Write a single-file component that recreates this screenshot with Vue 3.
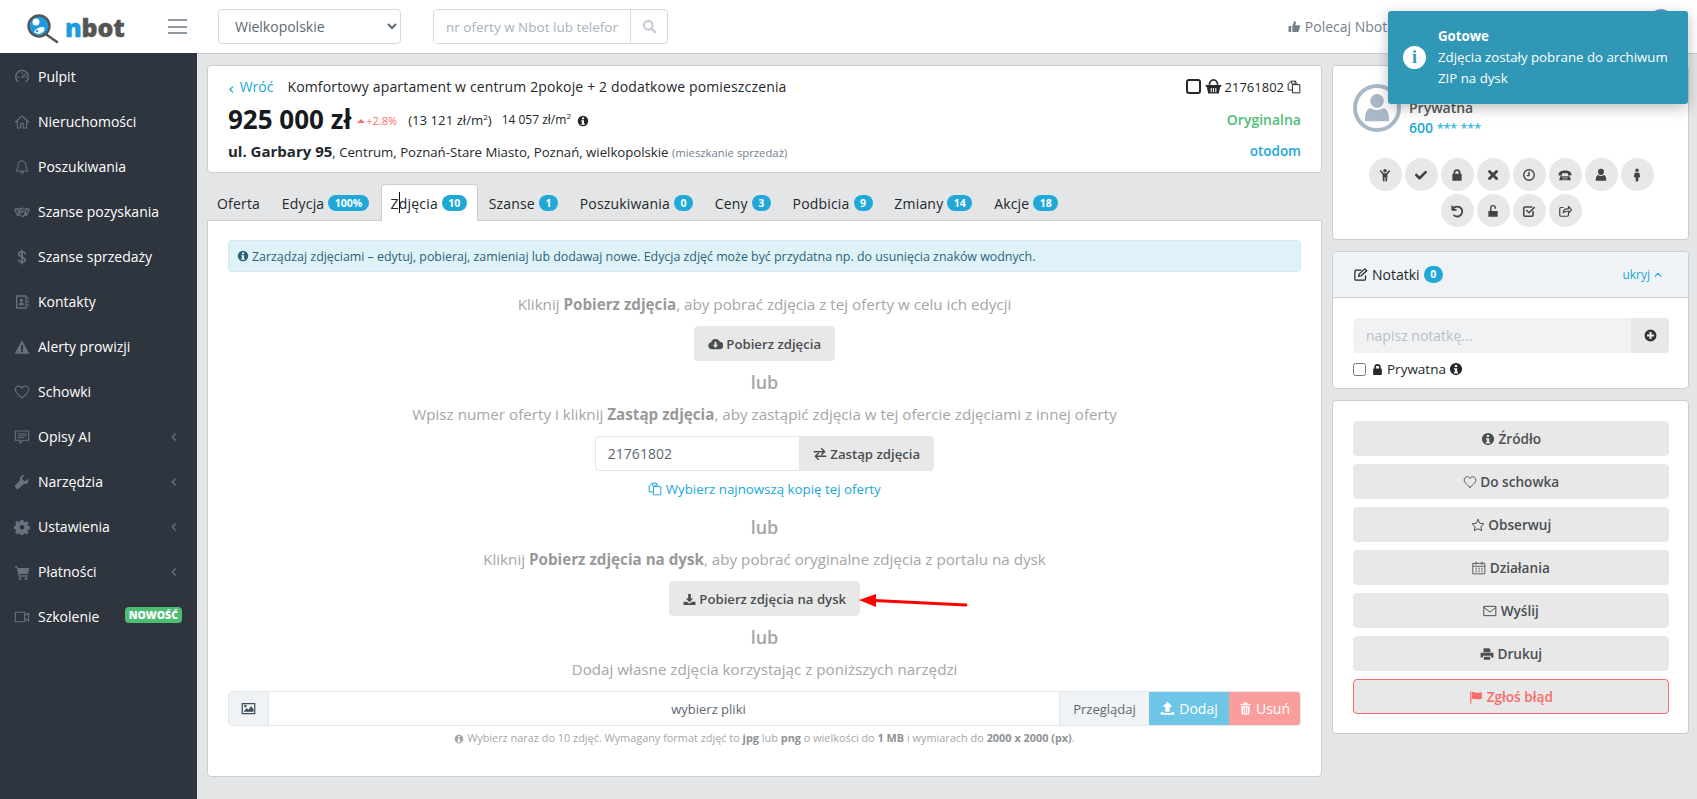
<script setup>
import { h } from 'vue'

const icons = {
  gauge: ['M6 19a9.5 9.5 0 1 1 12 0M12 13l4-5M6 12h1M12 5.5v1M17 12h1', 2],
  home: ['M2 12 12 3l10 9M5 10v11h5v-7h4v7h5V10', 1.6],
  bell: ['M12 3c-4 0-6 3-6 7 0 5-2 6-3 8h18c-1-2-3-3-3-8 0-4-2-7-6-7zM10 19c0 3 4 3 4 0M12 1v2', 1.6],
  hands: ['M1 8l4-1 3 9-3 1zM23 8l-4-1-3 9 3 1zM6 8c3 0 4-2 6-2s4 2 6 2M18 15l-5 4-5-3M11 8l-3 4 3 1 3-3 4 4', 1.8],
  dollar: ['M17 7c-1-3-9-4-10 0s10 5 10 10c0 3-8 4-10 0M12 2v20', 2.6],
  book: ['M3 2h16v20H3zM5 4v16h12V4zM11 7a2.5 2.5 0 1 1 0 5 2.5 2.5 0 0 1 0-5zM7 17c0-6 8-6 8 0zM20 5h2v3h-2zM20 10h2v3h-2zM20 15h2v3h-2z'],
  warn: ['M12 2 23 22H1zM10.5 9h3v7h-3zM10.5 17h3v3h-3z'],
  heart: ['M12 21C6 16 2 12.500 2 8.500 2 5 5 3 7.500 3 9.500 3 11 4 12 6c1-2 2.500-3 4.500-3C19 3 22 5 22 8.500c0 4-4 7.500-10 12.500z', 1.6],
  comment: ['M2 3h20v14h-9l-4 4v-4H2zM6 7h12M6 10h12M6 13h8', 1.6],
  wrench: ['M21 7l-4 4-4-2-1-3 4-4c-4-1-8 2-7 7L2 17c-1 1-1 2 0 3l2 2c1 1 2 1 3 0l8-7c5 1 8-3 6-8z'],
  cog: ['M10 1h4l.6 3 2 .8 2.600-1.600 2.800 2.800-1.700 2.600.9 2 3 .6v4l-3 .6-.9 2 1.700 2.600-2.800 2.800-2.600-1.700-2 .9-.6 3h-4l-.6-3-2-.9-2.600 1.700L1.600 20 3.300 17.400l-.9-2-3-.6v-4l3-.6.9-2L1.600 5.600 4.400 2.800 7 4.500l2.400-.8zM12 9a3.500 3.500 0 1 0 0 7 3.500 3.500 0 0 0 0-7z'],
  cart: ['M1 3h4l1 3h17l-2 9H8l.5 2H21v2H7L4 5H1zM9 20a2 2 0 1 1 0 4 2 2 0 0 1 0-4zM18 20a2 2 0 1 1 0 4 2 2 0 0 1 0-4z'],
  video: ['M2 5h14v14H2zM16 10l6-4v12l-6-4', 1.6],
  info: ['M12 1.500a10.500 10.500 0 1 0 0 21 10.500 10.500 0 0 0 0-21zM10 5h4v3.500h-4zM8.500 10.500H14V17h1.500v2.500h-7V17H10v-4H8.500z'],
  cloud: ['M6 21a5.500 5.500 0 0 1-1-10.900A7.500 7.500 0 0 1 19 9a6 6 0 0 1-1 12zM10.500 9v5H8l4 5 4-5h-2.500V9z'],
  download: ['M9.500 2h5v8H19l-7 7-7-7h4.500zM1 16h6l5 4 5-4h6v6H1z'],
  upload: ['M12 1l8 8h-4.500v8h-7V9H4zM1 18h5v1h12v-1h5v4H1z'],
  trash: ['M9 1h6l1 3h6v2H2V4h6zM4 8h16l-1 15H5zM8 10v11h1.500V10zM11.200 10v11h1.500V10zM14.500 10v11H16V10z'],
  exchange: ['M2 8h18M15 3l5 5-5 5M22 16H4M9 11l-5 5 5 5', 2.600],
  copy: ['M8 6V2h6l3 4M8 17H2V7l5-5M10 8h12v14H10zM14 2v5h-5', 1.700],
  picture: ['M1 3h22v18H1zM3 5v14h18V5zM4 17l5-6 3 3 4-6 4 5v4zM7 6a2 2 0 1 1 0 4 2 2 0 0 1 0-4z'],
  basket: ['M1 10h22v2.500h-1.500L19.500 22h-15l-2-9.500H1zM5 9.500a7 8 0 0 1 14 0h-2.500a4.500 5.500 0 0 0-9 0zM8 14v6h1.500v-6zM11.200 14v6h1.500v-6zM14.500 14v6H16v-6z'],
  thumb: ['M1 11h5v11H1zM8 11l3.500-9c2 0 3.500 1.500 3 3.500l-1 4h7c2 0 2.500 2 1.500 3.500l-2 7.500c-.5 1-1 1.500-2 1.500H8z'],
  edit: ['M20 14v5a2 2 0 0 1-2 2H5a2 2 0 0 1-2-2V7a2 2 0 0 1 2-2h8M9 15l1-4 9-8 3 3-9 8z', 2],
  plus: ['M12 1a11 11 0 1 0 0 22 11 11 0 0 0 0-22zM10 5.500h4V10h4.500v4H14v4.500h-4V14H5.500v-4H10z'],
  lock: ['M6 10V8a6 6 0 0 1 12 0v2h1a1 1 0 0 1 1 1v10a1 1 0 0 1-1 1H5a1 1 0 0 1-1-1V11a1 1 0 0 1 1-1zm3 0h6V8a3 3 0 0 0-6 0z'],
  unlock: ['M4 12h16v10H4zM7 12V6.500a5 5 0 0 1 10 0V8h-2.500V6.500a2.500 2.500 0 0 0-5 0V12z'],
  star: ['M12 2.500l3 6.500 7 .9-5 4.800 1.300 7L12 18.300 5.700 21.700 7 14.700l-5-4.800 7-.9z', 1.700],
  calendar: ['M2 4h20v18H2zM7 1.500V6M17 1.500V6M2 9h20M6.500 12.500h1M11.500 12.500h1M16.500 12.500h1M6.500 15.500h1M11.500 15.500h1M16.500 15.500h1M6.500 18.500h1M11.500 18.500h1M16.500 18.500h1', 1.500],
  mail: ['M2 4h20v16H2zM2 6l10 8 10-8', 1.700],
  print: ['M6 2h10l2 3v4H6zM1 10h22v8h-4v-3H5v3H1zM6.500 16.500h11V22h-11z'],
  flag: ['M2 2h2v21H2zM5 4c4-2 6 1 9 1s5-1 8-1v11c-3 1-5 1-8 1s-5-2-9 0z'],
  search: ['M10 3a7 7 0 1 0 0 14 7 7 0 0 0 0-14zM15 15l6 6', 3.400],
  left: ['M15 5l-7 7 7 7', 3.400],
  up: ['M5 15l7-7 7 7', 2.600],
  check: ['M4 12l5.500 5.500L20 7', 4.500],
  times: ['M6 6l12 12M18 6 6 18', 5],
  clock: ['M12 3a9 9 0 1 0 0 18 9 9 0 0 0 0-18zM12 7v6h-3', 2.400],
  phone: ['M1 11C1 2 23 2 23 11v2h-6V9H7v4H1zM4 14h16l2 7H2zM8 16h2v1H8zM11 16h2v1h-2zM14 16h2v1h-2zM8 18.500h2v1H8zM11 18.500h2v1h-2zM14 18.500h2v1h-2z'],
  user: ['M12 1.500a5 5 0 0 1 5 5.500 5 5 0 0 1-10 0 5 5 0 0 1 5-5.500zM7 12c3 2 7 2 10 0 3 1 4 4 4 10H3c0-6 1-9 4-10z'],
  male: ['M12 1a3 3 0 1 1 0 6 3 3 0 0 1 0-6zM8 8h8l1.500 8h-3l-.5 7h-4l-.5-7h-3z'],
  child: ['M12 1.500a3 3 0 1 1 0 6 3 3 0 0 1 0-6zM3 5l1.800-1.500L9.500 9h5l4.700-5.500L21 5l-5 6.500V15l-.5 8h-2.700v-7h-1.600v7H8.500L8 15v-3.500z'],
  undo: ['M4 4v6h6M4.500 10A8.500 8.500 0 1 1 7 19.500', 3.200],
  chksq: ['M19 13v6a2 2 0 0 1-2 2H5a2 2 0 0 1-2-2V7a2 2 0 0 1 2-2h12M8 11l4 4 9-9', 2.600],
  share: ['M18 15v4a2 2 0 0 1-2 2H5a2 2 0 0 1-2-2V8a2 2 0 0 1 2-2h4M9 15c0-5 4-7 9-7V4l5 6-5 6v-4c-4 0-6 1-9 3z', 2]
}

const Ico = (props) => {
  const [d, sw] = icons[props.n]
  return h('svg', { viewBox: '0 0 24 24', width: props.s || 14, height: props.s || 14, class: 'ico', 'aria-hidden': 'true' }, [
    h('path', {
      d,
      fill: sw ? 'none' : 'currentColor',
      stroke: sw ? 'currentColor' : 'none',
      'stroke-width': sw || 0,
      'fill-rule': 'evenodd',
      'stroke-linecap': 'round',
      'stroke-linejoin': 'round'
    })
  ])
}
Ico.props = ['n', 's']

const menu = [
  { label: 'Pulpit', icon: 'gauge' },
  { label: 'Nieruchomości', icon: 'home' },
  { label: 'Poszukiwania', icon: 'bell' },
  { label: 'Szanse pozyskania', icon: 'hands' },
  { label: 'Szanse sprzedaży', icon: 'dollar' },
  { label: 'Kontakty', icon: 'book' },
  { label: 'Alerty prowizji', icon: 'warn' },
  { label: 'Schowki', icon: 'heart' },
  { label: 'Opisy AI', icon: 'comment', arrow: true },
  { label: 'Narzędzia', icon: 'wrench', arrow: true },
  { label: 'Ustawienia', icon: 'cog', arrow: true },
  { label: 'Płatności', icon: 'cart', arrow: true },
  { label: 'Szkolenie', icon: 'video', tag: 'NOWOŚĆ' }
]

const tabs = [
  { label: 'Oferta' },
  { label: 'Edycja', badge: '100%' },
  { label: 'Zdjęcia', badge: '10', active: true },
  { label: 'Szanse', badge: '1' },
  { label: 'Poszukiwania', badge: '0' },
  { label: 'Ceny', badge: '3' },
  { label: 'Podbicia', badge: '9' },
  { label: 'Zmiany', badge: '14' },
  { label: 'Akcje', badge: '18' }
]

const roundIcons = ['child', 'check', 'lock', 'times', 'clock', 'phone', 'user', 'male', 'undo', 'unlock', 'chksq', 'share']

const actions = [
  { label: 'Źródło', icon: 'info' },
  { label: 'Do schowka', icon: 'heart' },
  { label: 'Obserwuj', icon: 'star' },
  { label: 'Działania', icon: 'calendar' },
  { label: 'Wyślij', icon: 'mail' },
  { label: 'Drukuj', icon: 'print' }
]
</script>

<template>
  <div class="app">
    <header class="topbar">
      <div class="brand">
        <svg class="logo-mark" viewBox="0 0 34 30" width="34" height="30" aria-hidden="true">
          <line x1="21" y1="21" x2="31" y2="28" stroke="#555" stroke-width="2.600" stroke-linecap="round" />
          <circle cx="13" cy="12" r="10.500" fill="#1b9be0" stroke="#555" stroke-width="2.400" />
          <circle cx="10" cy="8" r="3.500" fill="#fff" />
          <path d="M8 18c2-4 6-5 9-5 2 0 2 3 0 5-3 3-7 2-9 0z" fill="#fff" />
          <circle cx="11" cy="17" r="1.200" fill="#1b9be0" />
        </svg>
        <span class="wordmark"><span class="wm-n">n</span>bot</span>
      </div>
      <button class="burger" aria-label="menu"><i></i><i></i><i></i></button>
      <select class="region">
        <option>Wielkopolskie</option>
      </select>
      <div class="search">
        <input class="search-input" placeholder="nr oferty w Nbot lub telefon" />
        <span class="search-btn"><Ico n="search" s="15" /></span>
      </div>
      <div class="top-right">
        <span class="recommend"><Ico n="thumb" s="13" /> Polecaj Nbota</span>
        <span class="top-avatar"></span>
      </div>
    </header>

    <div class="body">
      <aside class="sidebar">
        <a v-for="m in menu" :key="m.label" class="nav-item">
          <span class="nav-icon"><Ico :n="m.icon" s="16" /></span>
          <span class="nav-label">{{ m.label }}</span>
          <span v-if="m.arrow" class="nav-arrow"><Ico n="left" s="10" /></span>
          <span v-if="m.tag" class="nav-tag">{{ m.tag }}</span>
        </a>
      </aside>

      <main class="main">
        <div class="left-col">
          <section class="card offer">
            <div class="offer-row one">
              <a class="back"><Ico n="left" s="9" /> Wróć</a>
              <span class="offer-title">Komfortowy apartament w centrum 2pokoje + 2 dodatkowe pomieszczenia</span>
              <span class="offer-id">
                <input type="checkbox" class="id-check" />
                <Ico n="basket" s="17" />
                21761802
                <Ico n="copy" s="14" />
              </span>
            </div>
            <div class="offer-row two">
              <span class="price">925 000 zł</span>
              <span class="delta"><span class="delta-up"></span>+2.8%</span>
              <span class="ppm">(13 121 zł/m<sup>2</sup>)</span>
              <span class="ppm2">14 057 zł/m<sup>2</sup></span>
              <span class="price-info"><Ico n="info" s="12" /></span>
              <span class="status">Oryginalna</span>
            </div>
            <div class="offer-row three">
              <span class="address"><b>ul. Garbary 95</b>, Centrum, Poznań-Stare Miasto, Poznań, wielkopolskie <small>(mieszkanie sprzedaż)</small></span>
              <a class="source">otodom</a>
            </div>
          </section>

          <nav class="tabs">
            <a v-for="t in tabs" :key="t.label" class="tab" :class="{ active: t.active }">
              {{ t.label }}
              <span v-if="t.badge" class="badge">{{ t.badge }}</span>
              <span v-if="t.active" class="mouse-caret"></span>
            </a>
          </nav>

          <section class="panel">
            <div class="alert"><Ico n="info" s="12" /><span>Zarządzaj zdjęciami – edytuj, pobieraj, zamieniaj lub dodawaj nowe. Edycja zdjęć może być przydatna np. do usunięcia znaków wodnych.</span></div>

            <p class="lead first">Kliknij <b>Pobierz zdjęcia</b>, aby pobrać zdjęcia z tej oferty w celu ich edycji</p>
            <div class="center"><button class="btn"><Ico n="cloud" s="15" /> Pobierz zdjęcia</button></div>
            <div class="or">lub</div>
            <p class="lead">Wpisz numer oferty i kliknij <b>Zastąp zdjęcia</b>, aby zastąpić zdjęcia w tej ofercie zdjęciami z innej oferty</p>
            <div class="center">
              <div class="replace">
                <input class="replace-input" value="21761802" />
                <button class="btn attached"><Ico n="exchange" s="14" /> Zastąp zdjęcia</button>
              </div>
            </div>
            <a class="newest"><Ico n="copy" s="14" /> Wybierz najnowszą kopię tej oferty</a>
            <div class="or second">lub</div>
            <p class="lead">Kliknij <b>Pobierz zdjęcia na dysk</b>, aby pobrać oryginalne zdjęcia z portalu na dysk</p>
            <div class="center"><button class="btn"><Ico n="download" s="13" /> Pobierz zdjęcia na dysk</button></div>
            <div class="or">lub</div>
            <p class="lead">Dodaj własne zdjęcia korzystając z poniższych narzędzi</p>

            <div class="file-group">
              <span class="file-icon"><Ico n="picture" s="15" /></span>
              <span class="file-name">wybierz pliki</span>
              <span class="file-browse">Przeglądaj</span>
              <span class="file-add"><Ico n="upload" s="15" /> Dodaj</span>
              <span class="file-del"><Ico n="trash" s="13" /> Usuń</span>
            </div>
            <p class="note"><Ico n="info" s="10" /> Wybierz naraz do 10 zdjęć. Wymagany format zdjęć to <b>jpg</b> lub <b>png</b> o wielkości do <b>1 MB</b> i wymiarach do <b>2000 x 2000 (px)</b>.</p>

            <svg class="red-arrow" viewBox="0 0 112 16" width="112" height="16" aria-hidden="true">
              <line x1="16" y1="7.500" x2="108" y2="12" stroke="#f00" stroke-width="3" stroke-linecap="round" />
              <polygon points="1,7 18,1 18,14" fill="#f00" />
            </svg>
          </section>
        </div>

        <div class="right-col">
          <section class="card owner">
            <div class="owner-head">
              <span class="owner-avatar"><Ico n="user" s="32" /></span>
              <div class="owner-text">
                <div class="owner-name">Prywatna</div>
                <div class="owner-phone">600 <span>*** ***</span></div>
              </div>
            </div>
            <div class="rounds">
              <span v-for="(r, i) in roundIcons" :key="i" class="round"><Ico :n="r" s="14" /></span>
            </div>
          </section>

          <section class="card notes">
            <div class="notes-head">
              <span class="notes-title"><Ico n="edit" s="15" /> Notatki <span class="badge">0</span></span>
              <a class="notes-hide">ukryj <Ico n="up" s="10" /></a>
            </div>
            <div class="notes-body">
              <div class="note-input">
                <input class="note-field" placeholder="napisz notatkę..." />
                <span class="note-add"><Ico n="plus" s="13" /></span>
              </div>
              <label class="note-private">
                <input type="checkbox" class="private-check" />
                <Ico n="lock" s="13" /> Prywatna <Ico n="info" s="14" />
              </label>
            </div>
          </section>

          <section class="card act">
            <button v-for="a in actions" :key="a.label" class="btn wide"><Ico :n="a.icon" s="14" /> {{ a.label }}</button>
            <button class="btn wide danger"><Ico n="flag" s="14" /> Zgłoś błąd</button>
          </section>
        </div>
      </main>
    </div>

    <aside class="toast">
      <span class="toast-icon">i</span>
      <div class="toast-text">
        <div class="toast-title">Gotowe</div>
        <div>Zdjęcia zostały pobrane do archiwum ZIP na dysk</div>
      </div>
    </aside>
  </div>
</template>

<style scoped>
.app { position: relative; min-height: 799px; font-family: "Open Sans", sans-serif; font-size: 14px; color: #23282c; background: #e4e5e6; overflow: hidden; }
.ico { vertical-align: -2px; flex: none; }
a { text-decoration: none; }
p { margin: 0; }
button { font-family: inherit; }

.topbar { background: #fff; border-bottom: 1px solid #c8ced3; display: flex; align-items: center; margin-bottom: -1px; box-sizing: border-box; height: 54px; }
.brand { width: 168px; padding-left: 26px; box-sizing: border-box; display: flex; align-items: center; gap: 5px; padding-top: 2px; }
.logo-mark { flex: none; margin-top: 3px; }
.wordmark { font-size: 25px; font-weight: 800; color: #555; line-height: 1; letter-spacing: -0.2px; -webkit-text-stroke: .4px currentColor; }
.wm-n { color: #1b9be0; }
.burger { width: 19px; height: 15px; padding: 0; border: 0; background: none; display: flex; flex-direction: column; justify-content: space-between; }
.burger i { display: block; height: 2px; background: #8f99a3; }
.region { margin-left: 31px; width: 183px; height: 35px; border: 1px solid #d5dade; border-radius: 4px; background: #fff; color: #5c6873; font: 14px "Open Sans", sans-serif; padding-left: 12px; }
.search { margin-left: 32px; width: 235px; height: 35px; display: flex; border: 1px solid #d5dade; border-radius: 4px; box-sizing: border-box; overflow: hidden; }
.search-input { width: 196px; flex: none; border: 0; outline: 0; padding: 0 12px; box-sizing: border-box; font: 13.500px "Open Sans", sans-serif; color: #5c6873; }
.search-input::placeholder { color: #a9b2ba; }
.search-btn { flex: 1; border-left: 1px solid #d5dade; display: flex; align-items: center; justify-content: center; color: #c5cbd0; }
.top-right { margin-left: auto; display: flex; align-items: center; padding-right: 25px; }
.recommend { color: #73818f; white-space: nowrap; display: flex; align-items: center; gap: 4px; }
.top-avatar { width: 22px; height: 22px; border-radius: 50%; background: #6b9bd8; margin-left: 255px; margin-top: -14px; }

.body { display: flex; min-height: 746px; }
.sidebar { width: 197px; flex: none; background: #2f353e; padding-top: 1px; box-sizing: border-box; }
.nav-item { height: 45px; display: flex; align-items: center; color: #fff; padding-left: 14px; padding-right: 16px; box-sizing: border-box; }
.nav-icon { width: 16px; margin-right: 8px; color: #667280; display: flex; justify-content: center; }
.nav-label { flex: 1; white-space: nowrap; }
.nav-arrow { color: #667280; margin-right: 2px; display: flex; }
.nav-tag { background: #4dbd74; color: #fff; font-size: 10.500px; font-weight: 800; padding: 0 4px; border-radius: 4px; line-height: 16px; margin-top: -3px; margin-right: -1px; }

.main { flex: 1; display: flex; gap: 10px; padding: 12px 8px 22px 10px; box-sizing: border-box; min-width: 0; }
.left-col { width: 1115px; flex: none; }
.right-col { width: 357px; flex: none; display: flex; flex-direction: column; gap: 11px; align-items: stretch; }
.card { background: #fff; border: 1px solid #c8ced3; border-radius: 4px; box-sizing: border-box; }

.offer { height: 108px; padding: 0 20px; }
.offer-row { display: flex; align-items: center; }
.offer-row.one { height: 21px; margin-top: 10px; }
.back { color: #20a8d8; font-size: 14px; white-space: nowrap; margin-left: -1px; }
.offer-title { margin-left: 14px; letter-spacing: .15px; }
.offer-id { margin-left: auto; display: flex; align-items: center; gap: 3px; font-size: 13px; }
.id-check { appearance: none; width: 15px; height: 15px; margin: 0 1px 0 0; border: 2px solid #23282c; border-radius: 3px; box-sizing: border-box; background: #fff; }
.offer-row.two { height: 32px; margin-top: 6px; }
.price { font-size: 26px; font-weight: 700; color: #151b1e; white-space: nowrap; }
.delta { color: #f86c6b; font-size: 11px; margin-left: 6px; margin-top: 3px; display: flex; align-items: center; }
.delta-up { width: 0; height: 0; border: 4px solid transparent; border-bottom: 4px solid #f86c6b; border-top: 0; margin-right: 1px; }
.ppm { margin-left: 11px; font-size: 13.200px; margin-top: 1px; }
.ppm2 { margin-left: 10px; font-size: 12px; margin-top: 1px; }
sup { font-size: 8px; line-height: 0; }
.price-info { margin-left: 6px; margin-top: 1px; }
.status { margin-left: auto; color: #4dbd74; font-weight: 600; }
.offer-row.three { height: 22px; margin-top: 5px; }
.address { font-size: 13.200px; white-space: nowrap; }
.address b { font-size: 15px; font-weight: 700; }
.address small { font-size: 11.300px; color: #73818f; }
.source { margin-left: auto; color: #20a8d8; font-weight: 600; font-size: 13.500px; }

.tabs { display: flex; height: 48px; padding-top: 11px; box-sizing: border-box; margin-bottom: -1px; position: relative; z-index: 1; }
.tab { height: 37px; padding: 0 10px 0 9px; display: flex; align-items: center; gap: 4px; border: 1px solid transparent; border-bottom: 0; color: #23282c; font-weight: 500; letter-spacing: .18px; white-space: nowrap; position: relative; box-sizing: border-box; margin-right: .8px; }
.tab.active { background: #fff; border-color: #c8ced3; border-radius: 4px 4px 0 0; }
.badge { background: #20a8d8; color: #fff; font-size: 10.500px; font-weight: 700; line-height: 1; letter-spacing: 0; padding: 3px 6.500px; border-radius: 10px; display: inline-block; }
.mouse-caret { position: absolute; left: 17px; top: 7px; width: 1px; height: 21px; background: #111; }

.panel { position: relative; height: 557px; background: #fff; border: 1px solid #c8ced3; border-radius: 0 0 4px 4px; padding: 19px 20px 0; box-sizing: border-box; }
.alert { height: 32px; background: #dff2f8; border: 1px solid #cfecf5; border-radius: 4px; padding: 0 8px; box-sizing: border-box; display: flex; align-items: center; gap: 3px; color: #2a6478; font-size: 12.400px; white-space: nowrap; }
.lead { height: 21px; line-height: 21px; text-align: center; color: #a6a6a6; font-size: 15.200px; margin-top: 8px; white-space: nowrap; }
.lead.first { margin-top: 22px; }
.lead b { font-weight: 700; color: #999; }
.center { display: flex; justify-content: center; margin-top: 11px; }
.btn { height: 35px; padding: 0 13px; border: 1px solid #e8e8e8; border-radius: 4px; background: #e8e8e8; color: #4a4f54; font-size: 13.200px; font-weight: 600; white-space: nowrap; }
.or { height: 27px; line-height: 27px; text-align: center; font-size: 18px; font-weight: 600; color: #a6a6a6; margin-top: 8px; }
.or.second { margin-top: 15px; }
.replace { display: flex; }
.replace-input { width: 204px; height: 35px; border: 1px solid #e4e7ea; border-right: 0; border-radius: 4px 0 0 4px; padding: 0 12px; box-sizing: border-box; font: 14px "Open Sans", sans-serif; color: #5c6873; outline: 0; }
.attached { border-radius: 0 4px 4px 0; }
.newest { display: block; text-align: center; color: #20a8d8; font-size: 13.300px; height: 20px; line-height: 20px; margin-top: 8px; }
.file-group { display: flex; height: 35px; margin-top: 11px; border-radius: 4px; overflow: hidden; border: 1px solid #e4e7ea; box-sizing: border-box; }
.file-group > span { display: flex; align-items: center; justify-content: center; gap: 4px; }
.file-icon { width: 39px; background: #f0f3f5; border-right: 1px solid #e4e7ea; color: #3f4f5f; }
.file-group > .file-name { flex: 1; color: #5c6873; font-size: 13px; padding-left: 89px; }
.file-browse { width: 89px; background: #f0f3f5; border-left: 1px solid #e4e7ea; color: #5c6873; font-size: 13px; }
.file-add { width: 80px; background: #6ec6e6; color: #fff; font-weight: 500; }
.file-del { width: 71px; background: #fa9d9d; color: #fff; font-weight: 500; }
.note { text-align: center; color: #a6a6a6; font-size: 10.900px; height: 15px; line-height: 15px; margin-top: 4px; white-space: nowrap; }
.note b { font-weight: 700; color: #8d9296; }
.red-arrow { position: absolute; left: 650px; top: 372px; }

.owner { height: 175px; padding: 18px 19px 0 20px; }
.owner-head { display: flex; height: 74px; }
.owner-avatar { width: 48px; height: 48px; box-sizing: border-box; border: 4px solid #a9b8c7; border-radius: 50%; color: #a9b8c7; display: flex; align-items: center; justify-content: center; flex: none; }
.owner-text { margin-left: 8px; padding-top: 14px; font-weight: 600; line-height: 20px; }
.owner-name { color: #55595e; }
.owner-phone { color: #20a8d8; }
.owner-phone span { font-size: 12.500px; font-weight: 600; color: #3cb5e0; }
.rounds { display: flex; flex-wrap: wrap; gap: 3px; justify-content: center; }
.round { width: 33px; height: 33px; border-radius: 50%; background: #e8e8e8; color: #444; display: flex; align-items: center; justify-content: center; }

.notes { height: 138px; overflow: hidden; }
.notes-head { height: 46px; background: #f0f3f5; border-bottom: 1px solid #c8ced3; display: flex; align-items: center; justify-content: space-between; padding: 0 25px 0 20px; box-sizing: border-box; }
.notes-title { display: flex; align-items: center; gap: 4px; }
.notes-hide { color: #20a8d8; font-size: 12px; display: flex; align-items: center; gap: 3px; }
.notes-body { padding: 20px 19px 0 20px; }
.note-input { display: flex; height: 35px; border-radius: 4px; overflow: hidden; }
.note-field { flex: 1; min-width: 0; border: 0; outline: 0; background: #f0f2f4; padding: 0 13px; font: 14px "Open Sans", sans-serif; }
.note-field::placeholder { color: #b9bec3; }
.note-add { width: 38px; background: #e8e8e8; display: flex; align-items: center; justify-content: center; color: #333; }
.note-private { display: flex; align-items: center; gap: 3px; margin-top: 6px; height: 20px; color: #23282c; font-size: 13.500px; }
.private-check { width: 13px; height: 13px; margin: 0 2px 0 0; }

.act { height: 334px; padding: 20px 19px 0 20px; display: flex; flex-direction: column; gap: 8px; }
.wide { width: 100%; flex: none; font-size: 13.600px; }
.danger { background: #e8e8e8; border-color: #f86c6b; color: #f86c6b; }

.toast { position: absolute; left: 1388px; top: 11px; width: 300px; height: 93px; background: #3097b6; border-radius: 3px; color: #fff; display: flex; align-items: center; padding-left: 15px; box-sizing: border-box; box-shadow: 0 4px 14px rgba(0, 0, 0, .25); line-height: 21px; font-size: 13.250px; }
.toast-icon { width: 23px; height: 23px; flex: none; border-radius: 50%; background: #fff; color: #3097b6; font-family: "Liberation Serif", serif; font-weight: 700; font-size: 18px; line-height: 23px; text-align: center; }
.toast-text { margin-left: 12px; width: 235px; }
.toast-title { font-weight: 700; }
</style>

<style>
html, body { margin: 0; background: #e4e5e6; overflow: hidden; }
</style>
